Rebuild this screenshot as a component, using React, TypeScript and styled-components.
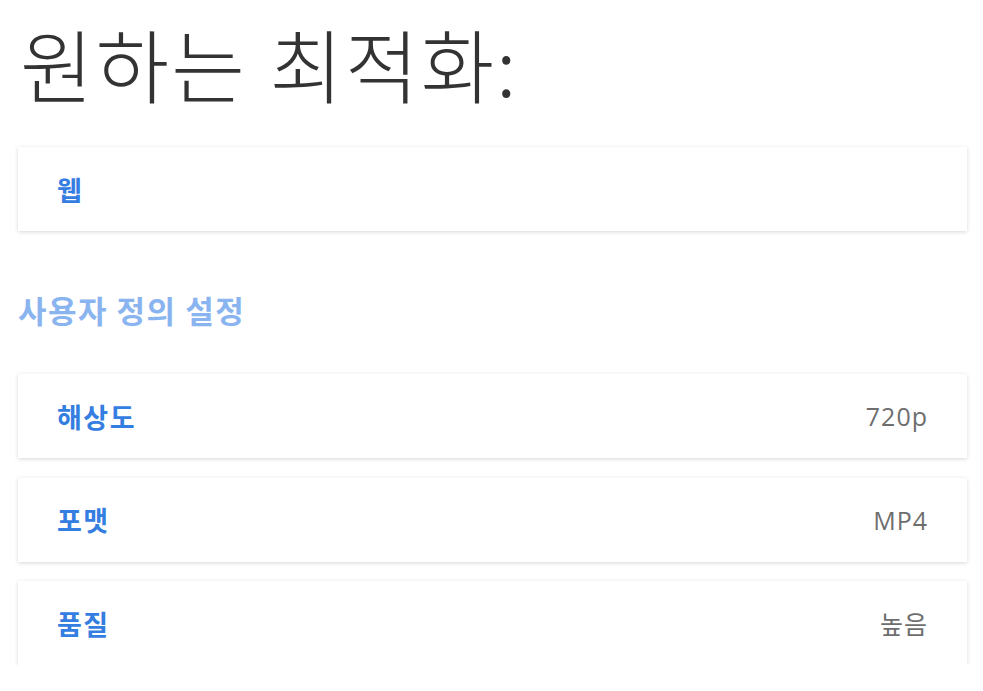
import styled, { createGlobalStyle } from "styled-components";

const GlobalStyle = createGlobalStyle`
  html, body {
    margin: 0;
    padding: 0;
    background: #ffffff;
  }
  body {
    font-family: "Noto Sans", "Noto Sans CJK KR", sans-serif;
  }
`;

type Option = {
    label: string;
    value?: string;
};

const customOptions: Option[] = [
    {label: '해상도', value: '720p'},
    {label: '포맷', value: 'MP4'},
    {label: '품질', value: '높음'},
];

const OptionCard = ({label, value}: Option) => {
    return (
        <StyledCard>
            <StyledCardLabel>{label}</StyledCardLabel>
            {value && <StyledCardValue>{value}</StyledCardValue>}
        </StyledCard>
    );
}

const App = () => {
    return (
        <>
            <GlobalStyle/>
            <StyledPage>
                <StyledTitle>원하는 최적화:</StyledTitle>
                <StyledCardList>
                    <OptionCard label={'웹'}/>
                </StyledCardList>
                <StyledSectionTitle>사용자 정의 설정</StyledSectionTitle>
                <StyledCardList>
                    {customOptions.map(option => (
                        <OptionCard key={option.label} label={option.label} value={option.value}/>
                    ))}
                </StyledCardList>
            </StyledPage>
        </>
    );
}

export default App;

const StyledPage = styled.div`
  display: flex;
  flex-flow: column nowrap;
  padding: 0 16px 0 18px;
`;

const StyledTitle = styled.h1`
  margin: 12px 0 35px 2px;
  font-family: "Noto Sans CJK KR", "Noto Sans", sans-serif;
  font-weight: 300;
  font-size: 80px;
  line-height: 100px;
  color: rgb(51, 51, 51);
  letter-spacing: 2px;
  word-spacing: 3px;
`;

const StyledCardList = styled.div`
  display: flex;
  flex-flow: column nowrap;
  gap: 19.5px;
`;

const StyledSectionTitle = styled.h2`
  margin: 62px 0 47px;
  font-family: "Noto Sans CJK KR", sans-serif;
  font-weight: 700;
  font-size: 31px;
  line-height: 34px;
  letter-spacing: 1.5px;
  color: rgb(138, 180, 240);
`;

const StyledCard = styled.div`
  display: flex;
  flex-flow: row nowrap;
  align-items: center;
  justify-content: space-between;
  height: 84px;
  box-sizing: border-box;
  padding: 0 39px;
  background: #ffffff;
  box-shadow: 0 1px 4px rgba(0, 0, 0, 0.16);
`;

const StyledCardLabel = styled.span`
  font-family: "Noto Sans CJK KR", sans-serif;
  font-weight: 700;
  font-size: 27px;
  letter-spacing: 1.5px;
  color: rgb(52, 125, 225);
`;

const StyledCardValue = styled.span`
  font-family: "Open Sans", "Noto Sans CJK KR", sans-serif;
  font-weight: 400;
  font-size: 25px;
  letter-spacing: 1px;
  color: rgb(110, 110, 110);
`;
